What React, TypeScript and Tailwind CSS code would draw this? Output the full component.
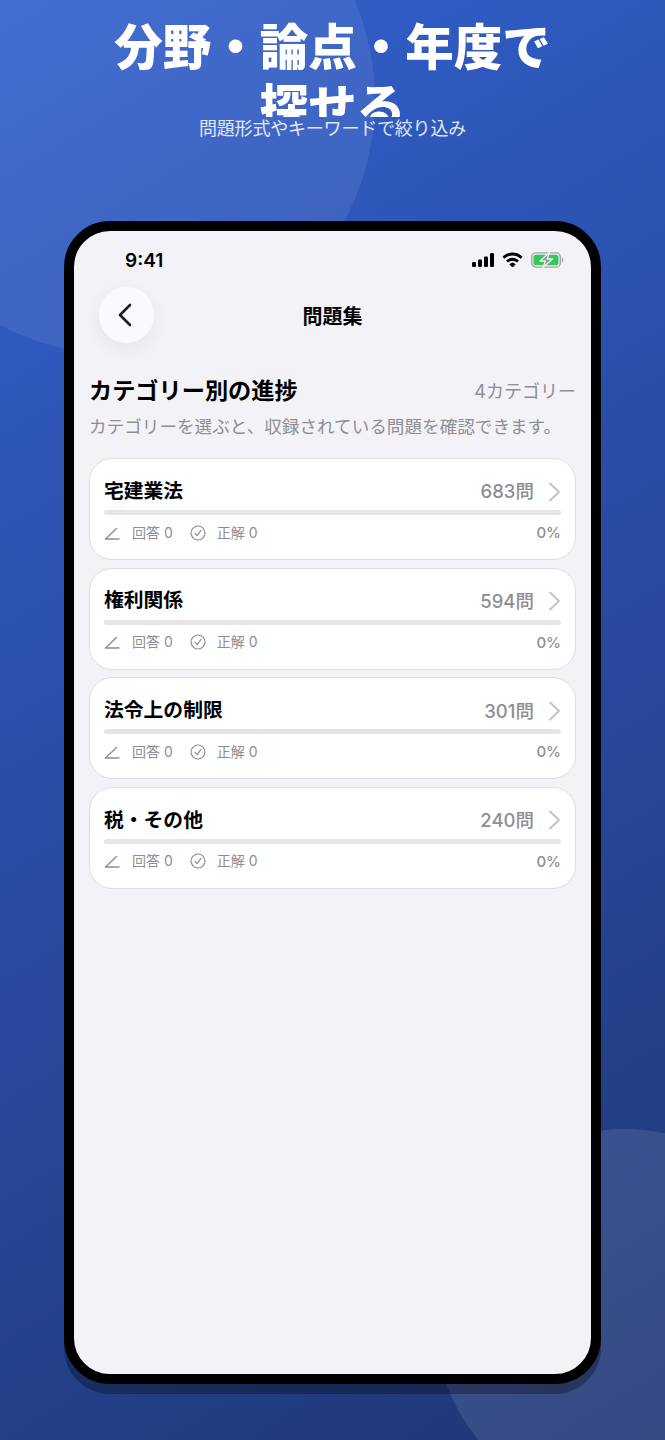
import React from 'react';

const categories = [
  { name: '宅建業法', count: 683 },
  { name: '権利関係', count: 594 },
  { name: '法令上の制限', count: 301 },
  { name: '税・その他', count: 240 },
];

const PencilIcon = () => (
  <svg width="16" height="16" viewBox="0 0 16 16" fill="none" stroke="#8e8e93" strokeWidth="1.4" strokeLinecap="round" strokeLinejoin="round">
    <path d="M1.5 14h13.5" />
    <path d="M1.5 14 12.5 3.5" />
  </svg>
);

const CheckIcon = () => (
  <svg width="16" height="16" viewBox="0 0 16 16" fill="none" stroke="#8e8e93" strokeWidth="1.2" strokeLinecap="round" strokeLinejoin="round">
    <circle cx="8" cy="8" r="7" />
    <path d="M5 8.2 7.2 10.6 11 5.4" />
  </svg>
);

const StatusIcons = () => (
  <div className="flex items-center">
    <svg width="24" height="16" viewBox="0 0 24 16" fill="#000">
      <rect x="1" y="10" width="4" height="5" rx="1.2" />
      <rect x="7" y="7.5" width="4" height="7.5" rx="1.2" />
      <rect x="13" y="4.5" width="4" height="10.5" rx="1.2" />
      <rect x="19" y="1" width="4" height="14" rx="1.2" />
    </svg>
    <svg className="ml-[7px]" width="21" height="16" viewBox="0 0 21 16" fill="none" stroke="#000" strokeWidth="2.8">
      <path d="M1.4 5.8a12.8 12.8 0 0 1 18.2 0" />
      <path d="M5 9.5a7.8 7.8 0 0 1 11 0" />
      <path d="M10.5 15 7.9 12.4a3.7 3.7 0 0 1 5.2 0z" fill="#000" strokeWidth="1" />
    </svg>
    <svg className="ml-[8px]" width="33" height="16" viewBox="0 0 33 16" fill="none">
      <rect x="0.7" y="0.9" width="28.6" height="14.2" rx="4.2" stroke="#a4a4a8" strokeWidth="1.4" />
      <rect x="2.5" y="2.7" width="25" height="10.6" rx="2.6" fill="#34c759" />
      <path d="M30.8 5.6c1 .3 1.6 1.2 1.6 2.4s-.6 2.1-1.6 2.4z" fill="#a4a4a8" />
      <path d="M18.5 0.5 9 9h5.4L12 15.5 21.5 7h-5.4z" fill="#8b9a90" stroke="#f2f2f7" strokeWidth="1.3" strokeLinejoin="round" />
    </svg>
  </div>
);

const CategoryCard = ({ name, count }: { name: string; count: number }) => (
  <div className="h-[102px] rounded-[23px] border border-[#dddde2] bg-white px-[14px] pt-[14px]">
    <div className="flex h-[37px] items-center justify-between">
      <span className="text-[19.8px] font-bold leading-none text-black">{name}</span>
      <div className="flex items-center">
        <span className="text-[18.5px] font-medium leading-none text-[#8e8e93]">{count}問</span>
        <svg className="ml-[14px]" width="13" height="20" viewBox="0 0 13 20" fill="none" stroke="#c0c0c5" strokeWidth="1.8" strokeLinecap="round" strokeLinejoin="round">
          <path d="M2 1.5 11 10 2 18.5" />
        </svg>
      </div>
    </div>
    <div className="h-[5px] rounded-full bg-[#e5e5e7]" />
    <div className="mt-[6px] flex h-[23px] items-center justify-between text-[#8e8e93]">
      <div className="flex items-center text-[14px] leading-none">
        <PencilIcon />
        <span className="ml-[12px]">回答 0</span>
        <span className="ml-[17px]"><CheckIcon /></span>
        <span className="ml-[11px]">正解 0</span>
      </div>
      <span className="text-[15px] font-medium leading-none">0%</span>
    </div>
  </div>
);

export default function App() {
  return (
    <div
      className="relative h-[1440px] w-[665px] overflow-hidden bg-[linear-gradient(149deg,#3261cf_0%,#203674_100%)] font-['Inter','Noto_Sans_CJK_JP',sans-serif]"
      lang="ja"
    >
      <div className="absolute left-[-135px] top-[-155px] h-[510px] w-[510px] rounded-full bg-white/[0.08]" />
      <div className="absolute left-[435px] top-[1129px] h-[380px] w-[380px] rounded-full bg-white/[0.1]" />

      <div className="relative">
        <div className="mx-auto h-[117px] w-[450px] overflow-hidden pt-[18px] text-center text-[48.5px] font-extrabold leading-[60px] text-white">
          分野・論点・年度で探せる
        </div>
        <p className="pt-[1px] text-center text-[18px] leading-[22px] tracking-[-0.2px] text-white/85">問題形式やキーワードで絞り込み</p>

        <div className="mx-[64px] mt-[81px] h-[1163px] overflow-hidden rounded-[46px] border-[10px] border-black bg-[#f2f2f7] shadow-[0_10px_0_rgba(0,0,0,0.3)]">
          <div className="flex h-[56px] items-center justify-between pl-[51px] pr-[27px] pt-[2px]">
            <span className="text-[19px] font-semibold leading-none text-black">9:41</span>
            <StatusIcons />
          </div>

          <div className="grid grid-cols-[1fr_auto_1fr] items-center pl-[25px]">
            <div className="flex h-[56px] w-[55px] items-center justify-center rounded-full bg-[#fafafe] shadow-[0_6px_20px_rgba(0,0,0,0.06)]">
              <svg className="ml-[-4px]" width="16" height="24" viewBox="0 0 16 24" fill="none" stroke="#1c1c1e" strokeWidth="2.6" strokeLinecap="round" strokeLinejoin="round">
                <path d="M13 2 3 12l10 10" />
              </svg>
            </div>
            <span className="mr-[25px] pt-[4px] text-[20px] font-semibold leading-none text-black">問題集</span>
            <div />
          </div>

          <div className="px-[15px] pt-[34px]">
            <div className="flex h-[30px] items-center justify-between">
              <h2 className="text-[23.2px] font-bold leading-none text-black">カテゴリー別の進捗</h2>
              <span className="text-[18px] leading-none text-[#8e8e93]">4カテゴリー</span>
            </div>
            <p className="mt-[7px] text-[17.6px] leading-[26px] text-[#8e8e93]">カテゴリーを選ぶと、収録されている問題を確認できます。</p>
            <div className="mt-[18px] flex flex-col gap-[7.67px]">
              {categories.map((c) => (
                <CategoryCard key={c.name} name={c.name} count={c.count} />
              ))}
            </div>
          </div>
        </div>
      </div>
    </div>
  );
}
